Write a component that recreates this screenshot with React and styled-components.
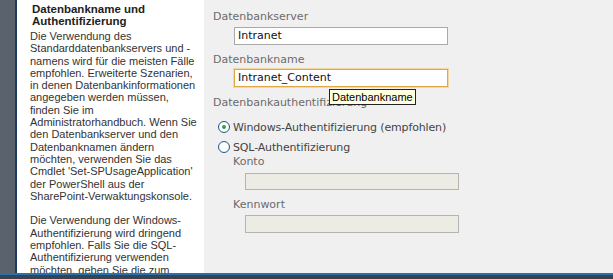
import styled, { createGlobalStyle } from 'styled-components'

const GlobalStyle = createGlobalStyle`
  html, body {
    margin: 0;
    padding: 0;
    background: #3b424a;
  }
  #root {
    width: 613px;
    height: 279px;
    overflow: hidden;
  }
`

const Page = styled.div`
  display: flex;
  flex-direction: column;
  width: 613px;
  height: 279px;
  background: #5a636d;
`

const Body = styled.div`
  display: flex;
  flex-direction: row;
  height: 273px;
  padding-left: 15px;
`

const Footer = styled.div`
  flex: 1;
  border-top: 2px solid #2f6fa8;
  background: linear-gradient(#1f4a70 0, #1f4a70 1px, #3b424a 2px);
`

const Sidebar = styled.div`
  width: 174px;
  padding: 3px 0 0 13px;
  background: #fff;
  border-left: 2px solid #1d3b5e;
  font-family: "Liberation Sans", Arial, sans-serif;
  color: #333;
  overflow: hidden;
`

const Heading = styled.h2`
  margin: 0 0 3px 2px;
  font-size: 11.5px;
  line-height: 12px;
  font-weight: bold;
  color: #222;
`

const Paragraph = styled.p`
  margin: 0 0 12.3px 0;
  font-size: 11px;
  line-height: 12.3px;
  white-space: pre-line;
`

const Main = styled.div`
  flex: 1;
  padding: 10px 0 0 9px;
  background: #f0f0f0;
  font-family: "DejaVu Sans", Verdana, sans-serif;
  font-size: 11px;
`

const Label = styled.div`
  margin-top: ${p => p.$top || 0}px;
  margin-left: ${p => p.$indent || 0}px;
  line-height: 14px;
  color: #6b6b6b;
`

const InputWrap = styled.div`
  position: relative;
  margin-top: ${p => p.$top || 0}px;
  margin-left: ${p => p.$indent || 21}px;
  width: 214px;
`

const TextBox = styled.div`
  box-sizing: border-box;
  height: ${p => p.$height || 18}px;
  padding: 0 3px;
  line-height: ${p => (p.$height || 18) - 2}px;
  color: #111;
  background: ${p => (p.$disabled ? '#ecebe4' : '#fff')};
  border: 1px solid ${p => (p.$focused ? '#e0a847' : p.$disabled ? '#b4b4b0' : '#a9a9a9')};
  box-shadow: ${p => (p.$focused ? '0 0 0 1px #f3d7a3' : 'none')};
`

const Tooltip = styled.div`
  position: absolute;
  left: 95px;
  top: 20px;
  padding: 0 2px;
  height: 16px;
  box-sizing: border-box;
  line-height: 14px;
  font-family: "Liberation Sans", Arial, sans-serif;
  font-size: 11px;
  color: #000;
  background: #ffffe1;
  border: 1px solid #222;
  z-index: 2;
`

const RadioRow = styled.label`
  display: flex;
  align-items: center;
  gap: 3px;
  margin-top: ${p => p.$top || 0}px;
  margin-left: 5px;
  height: 16px;
  color: #444;
  letter-spacing: -0.15px;
`

const RadioDot = styled.span`
  box-sizing: border-box;
  width: 12px;
  height: 12px;
  border-radius: 50%;
  border: 1px solid #1f5a8c;
  background: radial-gradient(circle, #fff 0, #fff 50%, #e4e8ec 100%);
  display: flex;
  align-items: center;
  justify-content: center;

  &::after {
    content: '';
    width: 4px;
    height: 4px;
    border-radius: 50%;
    background: ${p => (p.$checked ? '#2fa52f' : 'transparent')};
  }
`

export default function App() {
  return (
    <Page>
      <GlobalStyle />
      <Body>
        <Sidebar>
          <Heading>Datenbankname und<br />Authentifizierung</Heading>
          <Paragraph>
            {'Die Verwendung des\nStandarddatenbankservers und -\nnamens wird für die meisten Fälle\nempfohlen. Erweiterte Szenarien,\nin denen Datenbankinformationen\nangegeben werden müssen,\nfinden Sie im\nAdministratorhandbuch. Wenn Sie\nden Datenbankserver und den\nDatenbanknamen ändern\nmöchten, verwenden Sie das\nCmdlet \'Set-SPUsageApplication\'\nder PowerShell aus der\nSharePoint-Verwaktungskonsole.'}
          </Paragraph>
          <Paragraph>
            {'Die Verwendung der Windows-\nAuthentifizierung wird dringend\nempfohlen. Falls Sie die SQL-\nAuthentifizierung verwenden\nmöchten, geben Sie die zum'}
          </Paragraph>
        </Sidebar>
        <Main>
          <Label>Datenbankserver</Label>
          <InputWrap $top={3}>
            <TextBox>Intranet</TextBox>
          </InputWrap>
          <Label $top={8}>Datenbankname</Label>
          <InputWrap $top={2}>
            <TextBox $focused>Intranet_Content</TextBox>
            <Tooltip>Datenbankname</Tooltip>
          </InputWrap>
          <Label $top={9}>Datenbankauthentifizierung</Label>
          <RadioRow $top={9}>
            <RadioDot $checked />
            Windows-Authentifizierung (empfohlen)
          </RadioRow>
          <RadioRow $top={4}>
            <RadioDot />
            SQL-Authentifizierung
          </RadioRow>
          <Label $indent={20}>Konto</Label>
          <InputWrap $top={4} $indent={32}>
            <TextBox $disabled $height={17} />
          </InputWrap>
          <Label $top={8} $indent={20}>Kennwort</Label>
          <InputWrap $top={3} $indent={32}>
            <TextBox $disabled />
          </InputWrap>
        </Main>
      </Body>
      <Footer />
    </Page>
  )
}
